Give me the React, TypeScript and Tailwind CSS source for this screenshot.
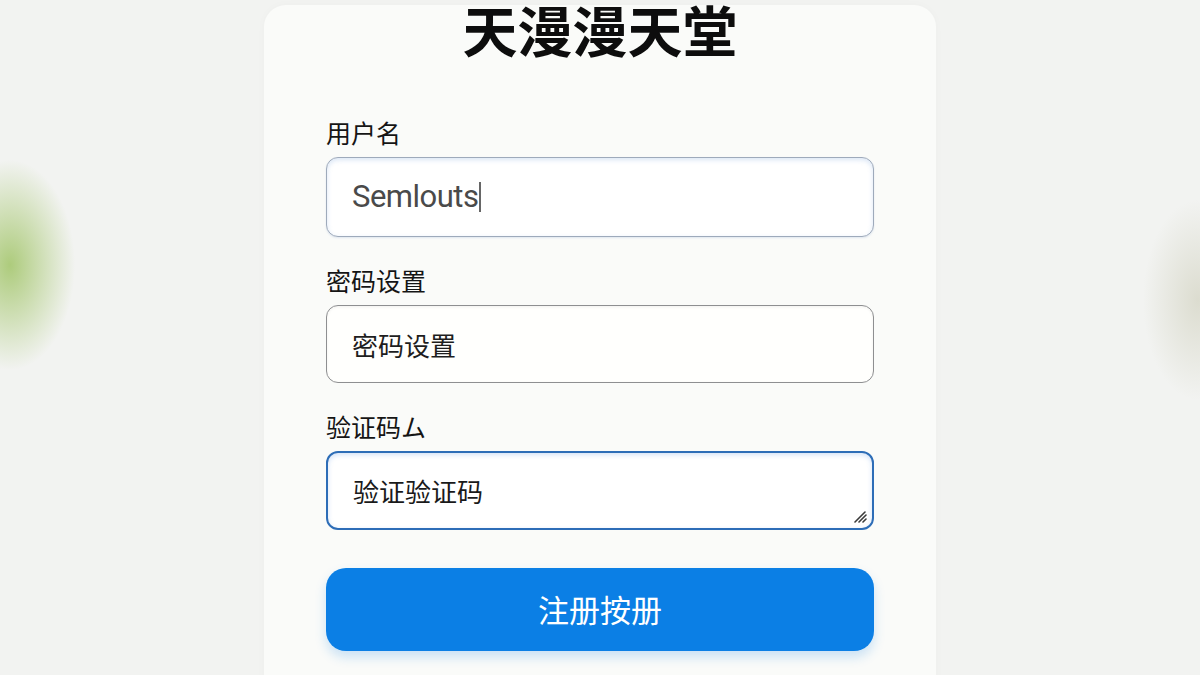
import React from "react";

const CJK = '"Noto Sans CJK SC", "Noto Sans", sans-serif';

function Field({
  label,
  children,
  className,
}: {
  label: string;
  children: React.ReactNode;
  className?: string;
}) {
  return (
    <div className={className}>
      <div className="mb-[10px] text-[25px] leading-[30px] text-[#151515]">{label}</div>
      {children}
    </div>
  );
}

function ResizeGrip() {
  return (
    <svg
      className="absolute bottom-[5px] right-[5px]"
      width="16"
      height="16"
      viewBox="0 0 16 16"
      aria-hidden="true"
    >
      <path d="M4 15 L14 5" stroke="#3a3a3a" strokeWidth="1.6" strokeLinecap="round" />
      <path d="M8 15 L15 8" stroke="#3a3a3a" strokeWidth="1.6" strokeLinecap="round" />
      <path d="M12 15 L15 12" stroke="#3a3a3a" strokeWidth="1.6" strokeLinecap="round" />
    </svg>
  );
}

export default function App() {
  return (
    <main
      className="flex h-[675px] w-full justify-center overflow-hidden bg-[#f2f3f1] bg-[radial-gradient(ellipse_65px_105px_at_10px_265px,rgba(150,190,85,0.75),rgba(150,190,85,0)),radial-gradient(ellipse_55px_100px_at_1198px_300px,rgba(205,205,185,0.6),rgba(205,205,185,0))] pt-[5px]"
      style={{ fontFamily: CJK }}
    >
      <section className="flex h-[720px] w-[672px] flex-col rounded-[22px] bg-[#fafbf9] px-[62px] shadow-[0_0_10px_rgba(0,0,0,0.025)]">
        <h1 className="mt-[-2px] text-center text-[55px] font-bold leading-[50px] text-[#0d0d0d]">
          天漫漫天堂
        </h1>

        <Field label="用户名" className="mt-[64px]">
          <div className="flex h-[80px] items-center rounded-[12px] border-[1.5px] border-[#9eaabb] bg-white px-[25px] shadow-[inset_0_2px_5px_rgba(120,160,220,0.28),0_1px_2px_rgba(120,150,200,0.2)]">
            <span
              className="text-[31px] tracking-[-0.5px] text-[#4a4a4a]"
              style={{ fontFamily: 'Roboto, "Noto Sans", sans-serif' }}
            >
              Semlouts
            </span>
            <span className="ml-[1px] h-[30px] w-[1.5px] bg-[#666]" />
          </div>
        </Field>

        <Field label="密码设置" className="mt-[28px]">
          <div className="flex h-[78px] items-center rounded-[12px] border-[1.5px] border-[#8e8f91] bg-[#fffffd] px-[25px] shadow-[inset_0_1px_3px_rgba(0,0,0,0.06)]">
            <span className="text-[26px] text-[#1e1e1e]">密码设置</span>
          </div>
        </Field>

        <Field label="验证码ム" className="mt-[28px]">
          <div className="relative flex h-[79px] items-center rounded-[12px] border-2 border-[#2d6db7] bg-white px-[25px] shadow-[inset_0_2px_5px_rgba(110,160,230,0.3)]">
            <span className="text-[26px] text-[#1a1a1a]">验证验证码</span>
            <ResizeGrip />
          </div>
        </Field>

        <button
          type="button"
          className="mt-[38px] h-[83px] w-full rounded-[20px] bg-[#0b7fe5] text-[31px] text-white shadow-[0_6px_12px_rgba(11,127,229,0.2)]"
        >
          注册按册
        </button>
      </section>
    </main>
  );
}
